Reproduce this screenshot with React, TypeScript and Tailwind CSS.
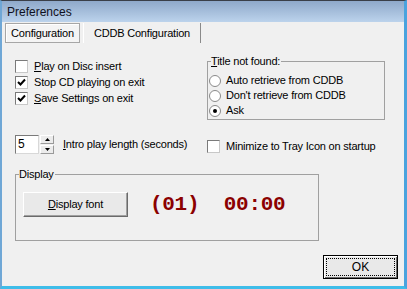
import React from "react";

function CheckBox({ checked }: { checked?: boolean }) {
  return (
    <span className="w-[13px] h-[13px] border border-t-[#7a7a7a] border-l-[#7a7a7a] border-r-[#c8c8c8] border-b-[#c8c8c8] bg-white flex items-center justify-center shrink-0">
      {checked && (
        <svg width="9" height="9" viewBox="0 0 9 9">
          <polyline points="1,4 3.5,6.5 8,1.5" fill="none" stroke="#000" strokeWidth="2" />
        </svg>
      )}
    </span>
  );
}

function Radio({ checked }: { checked?: boolean }) {
  return (
    <span className="w-[12px] h-[12px] rounded-full border border-[#8a8a8a] bg-white flex items-center justify-center shrink-0">
      {checked && <span className="w-[4px] h-[4px] rounded-full bg-black" />}
    </span>
  );
}

function GroupBox({ label, className, children }: { label: React.ReactNode; className: string; children?: React.ReactNode }) {
  return (
    <div className={`relative border border-[#a0a0a0] ${className}`}>
      {/* legend sits over the top border */}
      <span className="absolute left-[3px] -top-[7px] bg-[#f0f0f0] pr-[1px] leading-[12px]">{label}</span>
      {children}
    </div>
  );
}

export default function App() {
  return (
    <div className="w-[407px] h-[289px] flex flex-col border-t border-t-[#3a3f48] border-l-[2px] border-l-[#6fa7d6] border-r-[3px] border-r-[#4aa3de] border-b-[3px] border-b-[#3fbde9] bg-[#f0f0f0] text-[11px] tracking-[-0.2px] text-black font-['Liberation_Sans',Arial,sans-serif] overflow-hidden">
      {/* Title bar */}
      <div className="h-[21px] shrink-0 flex items-center px-[5px] bg-gradient-to-b from-[#8fa9ca] to-[#bcd3ec] text-[12px] tracking-normal text-[#101020]">
        Preferences
      </div>

      <div className="flex-1 flex flex-col">
        {/* Tabs */}
        <div className="flex items-stretch h-[20px] mt-[1px] ml-[3px]">
          <div className="w-[75px] flex items-center justify-center border border-[#a6a6a6] bg-[#f4f4f4] shadow-[inset_1px_1px_0_#ffffff]">
            Configuration
          </div>
          <div className="ml-[3px] w-[118px] flex items-center justify-center border-l border-l-white border-r border-r-[#8a8a8a]">
            CDDB Configuration
          </div>
        </div>

        <div className="pl-[13px]">
          {/* Row 1 */}
          <div className="flex">
            <div className="w-[192px] pt-[16px] flex flex-col gap-[1px]">
              <label className="h-[15px] flex items-center gap-[6px]">
                <CheckBox />
                <span><u>P</u>lay on Disc insert</span>
              </label>
              <label className="h-[15px] flex items-center gap-[6px]">
                <CheckBox checked />
                <span>Stop CD playing on exit</span>
              </label>
              <label className="h-[15px] flex items-center gap-[6px]">
                <CheckBox checked />
                <span><u>S</u>ave Settings on exit</span>
              </label>
            </div>
            <GroupBox
              label={<><u>T</u>itle not found:</>}
              className="mt-[18px] w-[178px] h-[59px] pl-[1px] pt-[11px] flex flex-col"
            >
              <label className="h-[15px] flex items-center gap-[5px]">
                <Radio />
                <span>Auto retrieve from CDDB</span>
              </label>
              <label className="h-[15px] flex items-center gap-[5px]">
                <Radio />
                <span>Don't retrieve from CDDB</span>
              </label>
              <label className="h-[15px] flex items-center gap-[5px]">
                <Radio checked />
                <span>Ask</span>
              </label>
            </GroupBox>
          </div>

          {/* Row 2 */}
          <div className="flex items-center mt-[14px] h-[20px]">
            <div className="w-[192px] flex items-center">
              <div className="w-[24px] h-[19px] bg-white border border-t-[#7a7a7a] border-l-[#7a7a7a] border-r-[#d8d8d8] border-b-[#d8d8d8] flex items-center pl-[2px] text-[12px]">
                5
              </div>
              <div className="ml-[1px] w-[14px] h-[19px] flex flex-col gap-[1px]">
                <div className="flex-1 bg-[#ececec] border border-[#9a9a9a] border-t-white border-l-white flex items-center justify-center">
                  <svg width="5" height="3" viewBox="0 0 5 3"><polygon points="2.5,0 5,3 0,3" fill="#000" /></svg>
                </div>
                <div className="flex-1 bg-[#ececec] border border-[#9a9a9a] border-t-white border-l-white flex items-center justify-center">
                  <svg width="5" height="3" viewBox="0 0 5 3"><polygon points="0,0 5,0 2.5,3" fill="#000" /></svg>
                </div>
              </div>
              <span className="ml-[9px]"><u>I</u>ntro play length (seconds)</span>
            </div>
            <label className="flex items-center gap-[6px] mt-[4px]">
              <CheckBox />
              <span>Minimize to Tray Icon on startup</span>
            </label>
          </div>

          {/* Display group */}
          <GroupBox label="Display" className="mt-[20px] w-[304px] h-[67px] pl-[7px] pt-[17px] flex items-start">
            <button className="w-[105px] h-[25px] bg-[#e9e9e9] border border-t-white border-l-white border-r-[#6a6a6a] border-b-[#6a6a6a] shadow-[inset_-1px_-1px_0_#a0a0a0]">
              <u>D</u>isplay font
            </button>
            <span className="ml-[22px] mt-[1px] whitespace-pre text-[21px] leading-[24px] tracking-[-0.3px] font-bold text-[#8b0000] font-['Liberation_Mono',monospace]">
              (01)  00:00
            </span>
          </GroupBox>
        </div>

        {/* OK */}
        <div className="flex justify-end pr-[6px] mt-[14px]">
          <button className="w-[75px] h-[24px] border border-black bg-[#e9e9e9] p-[2px] shadow-[inset_1px_1px_0_#ffffff,inset_-1px_-1px_0_#6a6a6a]">
            <span className="w-full h-full flex items-center justify-center border border-dotted border-black text-[12px] tracking-normal">
              OK
            </span>
          </button>
        </div>
      </div>
    </div>
  );
}
